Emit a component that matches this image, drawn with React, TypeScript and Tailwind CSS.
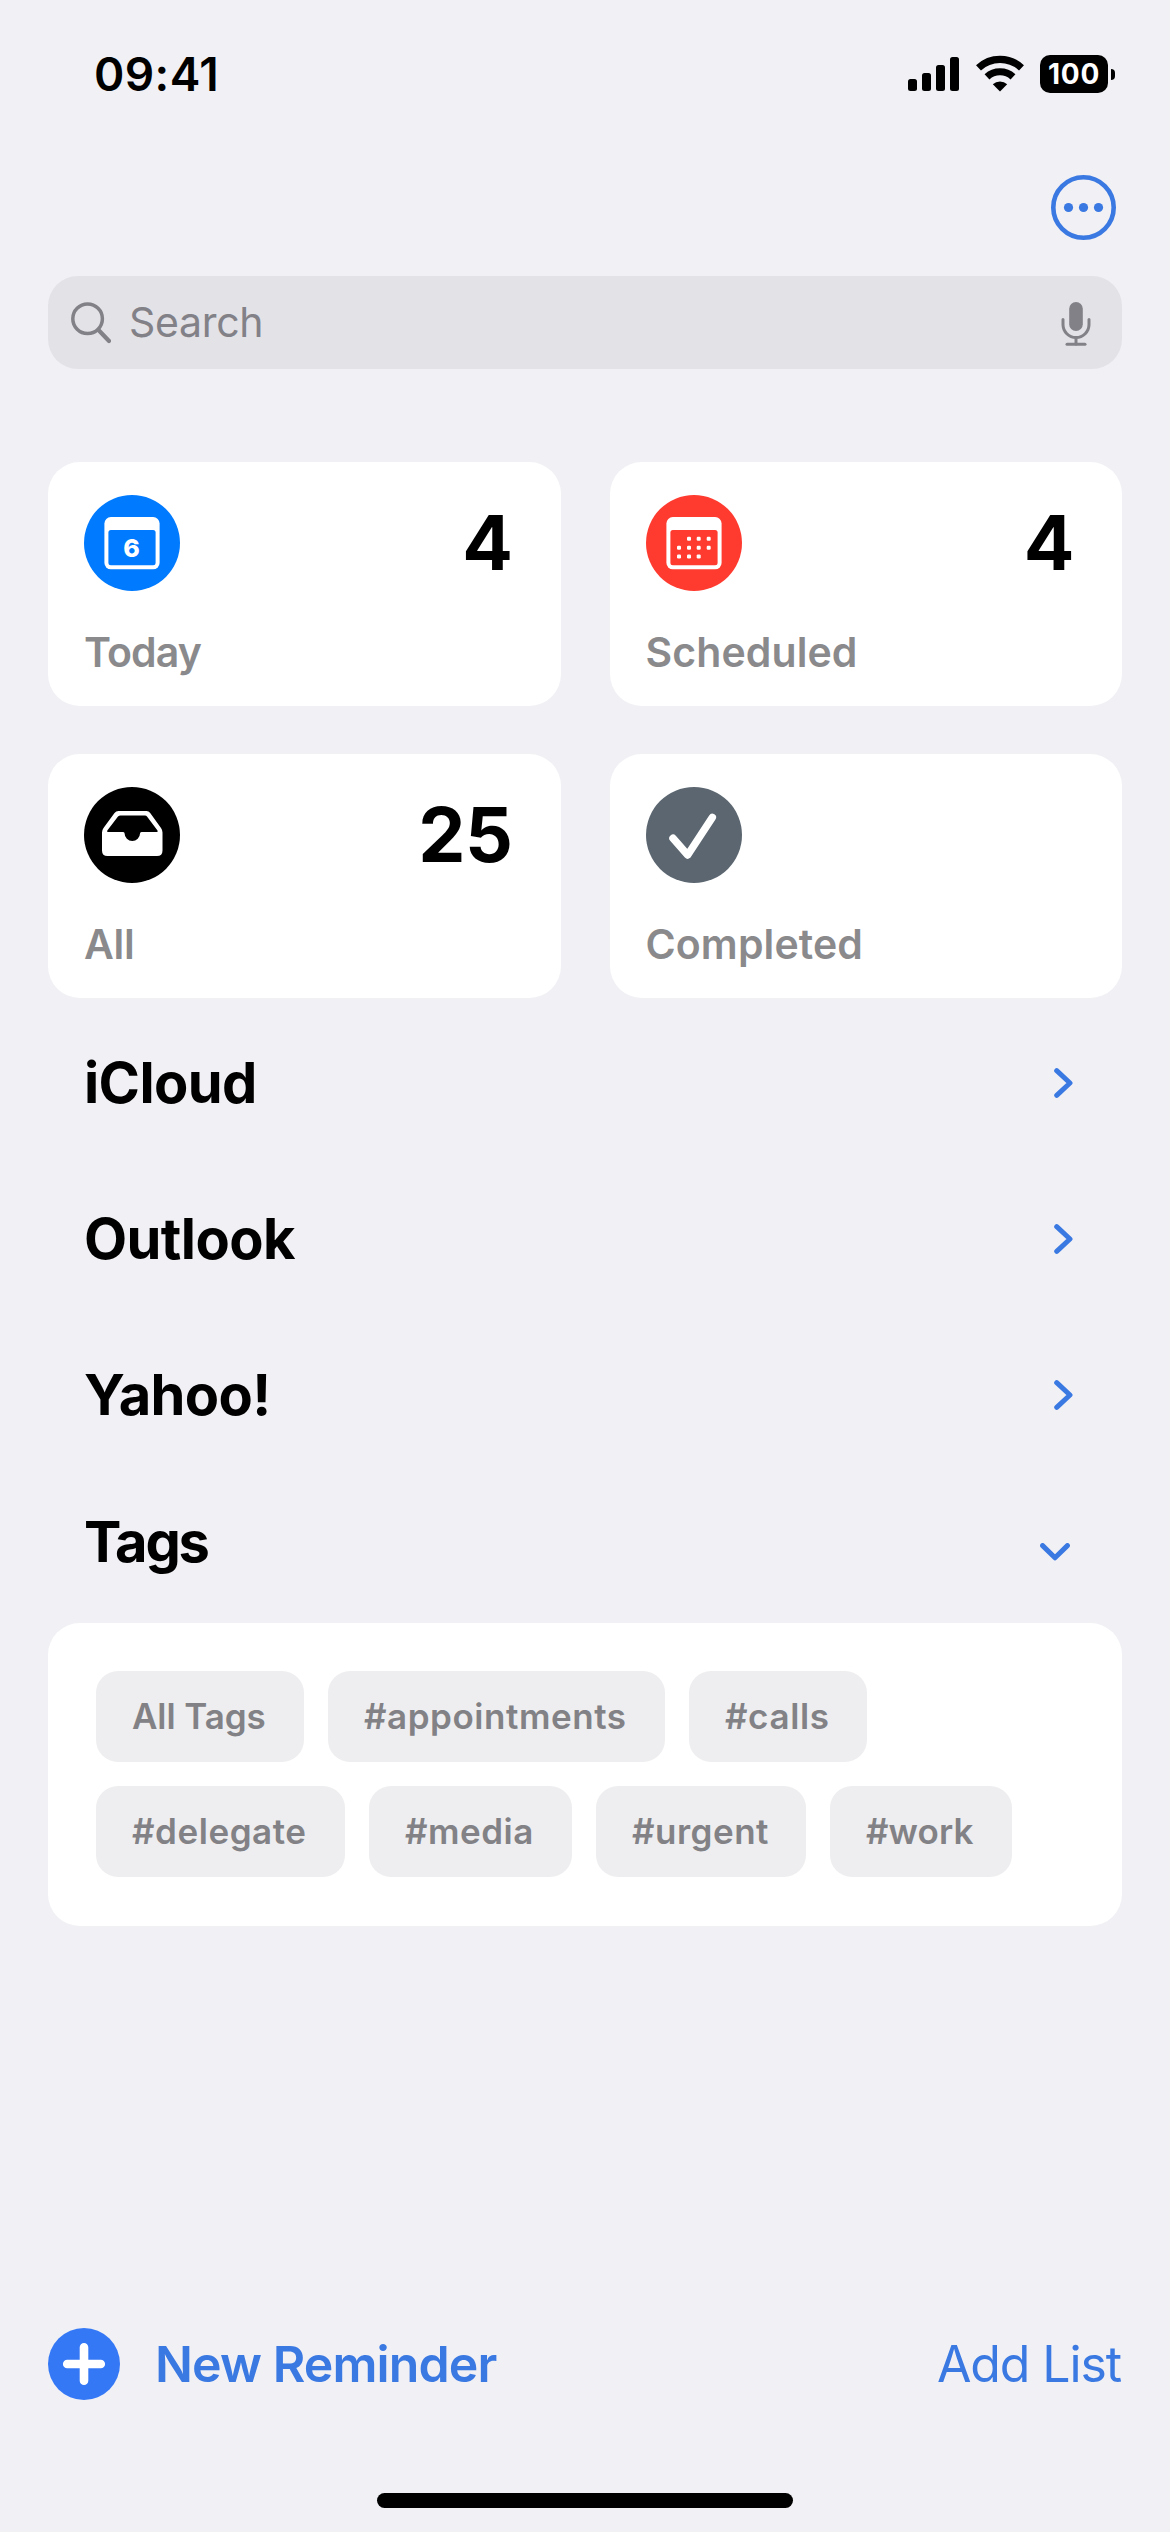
import React, { useState } from 'react';

type SmartList = {
  id: string;
  label: string;
  count?: number;
  tracking: string;
  icon: React.ReactNode;
};

const CalendarFrame = ({ fill }: { fill: string }) => (
  <>
    <rect x="20.4" y="22" width="55.2" height="52.3" rx="6.5" fill="#fff" />
    <rect x="24.4" y="35" width="47.2" height="35.2" rx="2.5" fill={fill} />
  </>
);

const TodayIcon = () => (
  <svg viewBox="0 0 96 96" className="w-24 h-24">
    <circle cx="48" cy="48" r="48" fill="#007aff" />
    <CalendarFrame fill="#007aff" />
    <text x="47.5" y="62" textAnchor="middle" fontSize="25" fontWeight="800" fill="#fff">6</text>
  </svg>
);

const dots = [
  [43, 43.7], [52.7, 43.7], [62.7, 43.7],
  [33, 52.7], [43, 52.7], [52.7, 52.7], [62.7, 52.7],
  [33, 61.4], [43, 61.4], [52.7, 61.4],
];

const ScheduledIcon = () => (
  <svg viewBox="0 0 96 96" className="w-24 h-24">
    <circle cx="48" cy="48" r="48" fill="#ff3b30" />
    <CalendarFrame fill="#ff3b30" />
    {dots.map(([x, y]) => (
      <rect key={`${x}-${y}`} x={x - 2} y={y - 2} width="4" height="4" rx="1.2" fill="#fff" />
    ))}
  </svg>
);

const AllIcon = () => (
  <svg viewBox="0 0 96 96" className="w-24 h-24">
    <circle cx="48" cy="48" r="48" fill="#000" />
    <path
      d="M34.5 24H62.5Q64.8 24 66.2 26L77 41Q78.5 43.2 78.5 45.5V63.5Q78.5 69 73 69H23.5Q18 69 18 63.5V45.5Q18 43.2 19.5 41L30.5 26Q32 24 34.5 24Z"
      fill="#fff"
    />
    <path
      d="M36.5 28.5H61Q62.3 28.5 63 29.6L73.5 43.5Q74.2 45 72.8 45H57.5Q56 45 56 46.5A7.7 7.5 0 0 1 40.6 46.5Q40.6 45 39.2 45H24Q22.6 45 23.3 43.5L34 29.6Q35 28.5 36.5 28.5Z"
      fill="#000"
    />
  </svg>
);

const CompletedIcon = () => (
  <svg viewBox="0 0 96 96" className="w-24 h-24">
    <circle cx="48" cy="48" r="48" fill="#5b6670" />
    <path d="M27 51.3L41.7 68L66.3 30.5" fill="none" stroke="#fff" strokeWidth="7.5" strokeLinecap="round" strokeLinejoin="round" />
  </svg>
);

const smartLists: SmartList[] = [
  { id: 'today', label: 'Today', count: 4, tracking: 'tracking-[-0.9px]', icon: <TodayIcon /> },
  { id: 'scheduled', label: 'Scheduled', count: 4, tracking: 'tracking-[0.1px]', icon: <ScheduledIcon /> },
  { id: 'all', label: 'All', count: 25, tracking: 'tracking-[-0.3px]', icon: <AllIcon /> },
  { id: 'completed', label: 'Completed', tracking: 'tracking-[0.1px]', icon: <CompletedIcon /> },
];

const accounts = ['iCloud', 'Outlook', 'Yahoo!'];

const tagRows = [
  [
    { name: 'All Tags', style: 'w-[208px] tracking-[-0.1px]' },
    { name: '#appointments', style: 'w-[337px] tracking-[0.55px]' },
    { name: '#calls', style: 'w-[178px] tracking-[0.6px]' },
  ],
  [
    { name: '#delegate', style: 'w-[249px] tracking-[0.55px]' },
    { name: '#media', style: 'w-[203px] tracking-[0.5px]' },
    { name: '#urgent', style: 'w-[210px] tracking-[0.5px]' },
    { name: '#work', style: 'w-[182px] tracking-[0.1px]' },
  ],
];

const StatusBar = () => (
  <div className="h-[148px] pl-[94px] pr-[55px] flex items-center justify-between">
    <span className="text-[46px] leading-none font-semibold tracking-[0.4px]">09:41</span>
    <div className="flex items-center">
      <svg viewBox="0 0 51 38" className="w-[51px] h-[38px]">
        <rect x="0" y="24" width="9" height="12" rx="2.5" />
        <rect x="14" y="18" width="9" height="18" rx="2.5" />
        <rect x="28" y="10" width="9" height="26" rx="2.5" />
        <rect x="42" y="2" width="9" height="34" rx="2.5" />
      </svg>
      <svg viewBox="0 0 50 38" className="w-[50px] h-[38px] ml-4">
        <g fill="none" stroke="#000" strokeWidth="7.2">
          <path d="M3.5 12.8A31.5 31.5 0 0 1 46.5 12.8" />
          <path d="M12 21.8A19.3 19.3 0 0 1 38 21.8" />
        </g>
        <path d="M25 36.5L17.8 29.3A10.5 10.5 0 0 1 32.2 29.3Z" />
      </svg>
      <div className="ml-[15px] w-[68px] h-[38px] rounded-[10px] bg-black text-white flex items-center justify-center text-[28px] leading-none font-bold tracking-[0.8px]">
        100
      </div>
      <div className="ml-[3px] w-1 h-[11px] rounded-r-full bg-black" />
    </div>
  </div>
);

const Chevron = ({ open = false }: { open?: boolean }) =>
  open ? (
    <svg viewBox="0 0 30 18" className="w-[30px] h-[18px] mt-5 mr-0.5">
      <path d="M2.6 2.6L15 14.8L27.4 2.6" fill="none" stroke="#3a79e2" strokeWidth="5" strokeLinecap="round" strokeLinejoin="round" />
    </svg>
  ) : (
    <svg viewBox="0 0 19 30" className="w-[19px] h-[30px]">
      <path d="M2.7 2.7L16 15L2.7 27.3" fill="none" stroke="#3a79e2" strokeWidth="5" strokeLinecap="round" strokeLinejoin="round" />
    </svg>
  );

const ListCard = ({ list }: { list: SmartList }) => (
  <button className="bg-white rounded-[32px] pl-9 pr-12 pt-[33px] flex flex-col text-left">
    <div className="w-full flex items-center justify-between">
      {list.icon}
      {list.count !== undefined && (
        <span className="mb-0.5 text-[75px] leading-none font-[650] tracking-[-0.5px]">{list.count}</span>
      )}
    </div>
    <span className={`mt-9 text-[41px] leading-[50px] font-semibold text-[#8a8a8c] ${list.tracking}`}>{list.label}</span>
  </button>
);

export default function App() {
  const [tagsOpen, setTagsOpen] = useState<boolean>(true);

  return (
    <div className="w-[1170px] h-[2532px] bg-[#f1f0f5] text-black flex flex-col font-['Inter','Liberation_Sans',sans-serif] overflow-hidden">
      <StatusBar />

      <div className="h-[119px] mb-[9px] pr-[54px] flex items-center justify-end">
        <svg viewBox="0 0 65 65" className="w-[65px] h-[65px]" fill="#3a79e2">
          <circle cx="32.5" cy="32.5" r="30.2" fill="none" stroke="#3a79e2" strokeWidth="4.6" />
          <circle cx="17.5" cy="32.5" r="4.6" />
          <circle cx="32.5" cy="32.5" r="4.6" />
          <circle cx="47.5" cy="32.5" r="4.6" />
        </svg>
      </div>

      <main className="px-12 flex flex-col">
        {/* Search field */}
        <div className="h-[93px] rounded-[30px] bg-[#e3e2e7] pl-[23px] pr-[31px] flex items-center text-[#828187]">
          <svg viewBox="0 0 40 42" className="w-10 h-[42px]" fill="none" stroke="currentColor" strokeLinecap="round">
            <circle cx="16.6" cy="16.8" r="14.8" strokeWidth="3.5" />
            <path d="M27.5 28L38 39" strokeWidth="4.2" />
          </svg>
          <span className="ml-[18px] grow text-[41px] leading-none tracking-[-0.3px]">Search</span>
          <svg viewBox="0 0 30 44" className="w-[30px] h-11 mt-[3px]" fill="none" stroke="currentColor" strokeWidth="3" strokeLinecap="round">
            <rect x="8.2" y="0" width="13.6" height="29" rx="6.8" fill="currentColor" stroke="none" />
            <path d="M2 17.5V22.5A13 13 0 0 0 28 22.5V17.5" />
            <path d="M15 36V42" />
            <path d="M6 42.3H24" />
          </svg>
        </div>

        {/* Smart lists */}
        <div className="mt-[93px] grid grid-cols-2 auto-rows-[244px] gap-x-[49px] gap-y-12">
          {smartLists.map((list) => (
            <ListCard key={list.id} list={list} />
          ))}
        </div>

        {/* Accounts */}
        <div className="mt-[7px] flex flex-col">
          {accounts.map((account) => (
            <button key={account} className="h-[156px] pl-9 pr-[49px] flex items-center justify-between">
              <span className="text-[56px] leading-none font-bold tracking-[-0.6px]">{account}</span>
              <Chevron />
            </button>
          ))}
          <button onClick={() => setTagsOpen(!tagsOpen)} className="h-[138px] mb-3 pl-9 pr-[50px] flex items-center justify-between">
            <span className="text-[56px] leading-none font-bold tracking-[-2.2px]">Tags</span>
            <Chevron open={tagsOpen} />
          </button>
        </div>

        {tagsOpen && (
          <div className="h-[303px] rounded-[32px] bg-white p-12 flex flex-col gap-6">
            {tagRows.map((row, i) => (
              <div key={i} className="flex gap-6">
                {row.map((tag) => (
                  <button
                    key={tag.name}
                    className={`${tag.style} h-[91px] pl-9 rounded-[22px] bg-[#eeeef0] text-[#828286] text-[35px] leading-none font-semibold text-left whitespace-nowrap`}
                  >
                    {tag.name}
                  </button>
                ))}
              </div>
            ))}
          </div>
        )}
      </main>

      {/* Bottom toolbar */}
      <footer className="mt-auto flex flex-col">
        <div className="h-[72px] px-12 flex items-center justify-between text-[#3a79e2] text-[50px] leading-none">
          <button className="flex items-center font-semibold tracking-[-0.9px]">
            <svg viewBox="0 0 72 72" className="w-[72px] h-[72px] mr-[35px]">
              <circle cx="36" cy="36" r="36" fill="#3478f6" />
              <path d="M36 19.2V52.8M19.2 36H52.8" stroke="#fff" strokeWidth="8.6" strokeLinecap="round" />
            </svg>
            New Reminder
          </button>
          <button className="pr-px tracking-[-1.1px]">Add List</button>
        </div>
        <div className="mt-[93px] mb-6 mx-auto w-[416px] h-[15px] rounded-full bg-black" />
      </footer>
    </div>
  );
}
